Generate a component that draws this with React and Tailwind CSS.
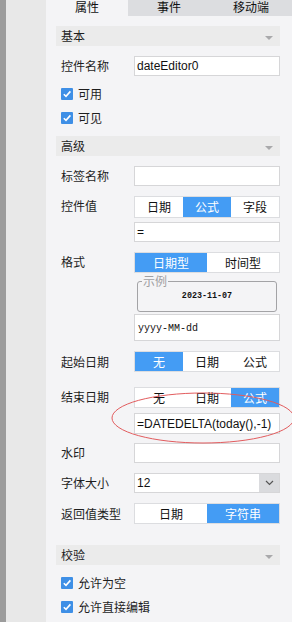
import React from "react";

const CJK = "font-['Noto_Sans_CJK_SC',sans-serif]";
const LAT = "font-['Liberation_Sans','Noto_Sans_CJK_SC',sans-serif]";

function Header({ title, className = "" }) {
  return (
    <div className={`h-[20px] bg-[#ebebeb] flex items-center justify-between pl-[5px] pr-[7px] ${className}`}>
      <span className="leading-[20px] text-[#1e1e1e]">{title}</span>
      <span className="w-0 h-0 mt-[3px] border-x-[4px] border-x-transparent border-t-[4px] border-t-[#a9a9ab]" />
    </div>
  );
}

function Check({ label, className = "" }) {
  return (
    <div className={`h-[24px] flex items-center pl-[5px] ${className}`}>
      <span className="w-[12px] h-[12px] bg-[#3e8fe6] rounded-[1px] flex items-center justify-center">
        <svg width="10" height="10" viewBox="0 0 10 10">
          <path d="M1.8 5.2 L4 7.4 L8.4 2.4" stroke="white" strokeWidth="1.6" fill="none" />
        </svg>
      </span>
      <span className="ml-[5px] leading-[16px] text-[#1e1e1e]">{label}</span>
    </div>
  );
}

function Input({ children, className = "", h = "h-[20px]" }) {
  return (
    <div className={`${h} bg-white border border-[#d6d6d8] flex items-center pl-[2px] overflow-hidden whitespace-nowrap ${LAT} text-[12px] text-[#111] ${className}`}>
      {children}
    </div>
  );
}

function Seg({ items, active, className = "" }) {
  return (
    <div className={`h-[21px] flex bg-white border border-[#dcdde0] ${className}`}>
      {items.map((it, i) => (
        <div
          key={it}
          className={`flex-1 flex items-center justify-center leading-[12px] ${
            i === active ? "bg-[#449cf4] text-white" : "text-[#111]"
          }`}
        >
          {it}
        </div>
      ))}
    </div>
  );
}

function Row({ label, children, top = false, className = "" }) {
  return (
    <div className={`flex ${top ? "items-start" : "items-center"} ${className}`}>
      <div className={`w-[78px] pl-[5px] shrink-0 text-[#1e1e1e] ${top ? "h-[20px] flex items-center" : ""}`}>
        {label}
      </div>
      <div className="flex-1 flex flex-col">{children}</div>
    </div>
  );
}

export default function App() {
  return (
    <div className={`relative flex w-[292px] h-[622px] overflow-hidden ${CJK} text-[12px]`}>
      <div className="w-[6px] shrink-0 bg-[#9c9c9c]" />
      <div className="w-[40px] shrink-0 bg-[#e8e8e8]" />
      <div className="flex-1 bg-[#f4f4f6] flex flex-col">
        <div className="h-[16px] flex">
          <div className="flex-1 flex justify-center text-[#111]">
            <span className="leading-[13px]">属性</span>
          </div>
          <div className="flex-1 flex justify-center bg-[#dcdde0] text-[#111]">
            <span className="leading-[13px]">事件</span>
          </div>
          <div className="flex-1 flex justify-center bg-[#dcdde0] text-[#111]">
            <span className="leading-[13px]">移动端</span>
          </div>
        </div>

        <div className="pl-[10px] pr-[12px] flex flex-col">
          <Header title="基本" className="mt-[10px]" />
          <Row label="控件名称" className="mt-[10px]">
            <Input>dateEditor0</Input>
          </Row>
          <Check label="可用" className="mt-[6px]" />
          <Check label="可见" />

          <Header title="高级" className="mt-[6px]" />
          <Row label="标签名称" className="mt-[10px]">
            <Input />
          </Row>
          <Row label="控件值" top className="mt-[10px]">
            <Seg items={["日期", "公式", "字段"]} active={1} className="h-[22px]" />
            <Input className="mt-[4px] h-[20px]">=</Input>
          </Row>
          <Row label="格式" top className="mt-[10px]">
            <Seg items={["日期型", "时间型"]} active={0} />
            <div className="relative mt-[8px] mx-[3px] h-[31px] border border-[#a3a3a6] rounded-[3px] flex justify-center pt-[9px]">
              <span className="absolute left-[4px] top-[-8px] px-[1px] bg-[#f4f4f6] text-[#a0a0a2] leading-[14px]">
                示例
              </span>
              <span className="font-['Liberation_Mono',monospace] text-[8.4px] font-bold leading-[10px] text-[#111]">
                2023-11-07
              </span>
            </div>
            <Input h="h-[27px]" className="mt-[2px]">
              <span className="font-['Liberation_Mono',monospace] text-[10px] text-[#111] pl-[1px] pt-[1px]">yyyy-MM-dd</span>
            </Input>
          </Row>
          <Row label="起始日期" className="mt-[10px]">
            <Seg items={["无", "日期", "公式"]} active={0} />
          </Row>
          <Row label="结束日期" top className="mt-[15px]">
            <Seg items={["无", "日期", "公式"]} active={2} />
            <Input className="mt-[5px] h-[21px]">=DATEDELTA(today(),-1)</Input>
          </Row>
          <Row label="水印" className="mt-[9px]">
            <Input />
          </Row>
          <Row label="字体大小" className="mt-[10px]">
            <div className="h-[20px] bg-white border border-[#d6d6d8] flex">
              <div className={`flex-1 flex items-center pl-[2px] ${LAT} text-[12px] text-[#111]`}>12</div>
              <div className="w-[20px] bg-[#dadbde] flex items-center justify-center">
                <svg width="9" height="6" viewBox="0 0 9 6">
                  <path d="M1 1 L4.5 4.5 L8 1" stroke="#555" strokeWidth="1.2" fill="none" />
                </svg>
              </div>
            </div>
          </Row>
          <Row label="返回值类型" className="mt-[10px]">
            <Seg items={["日期", "字符串"]} active={1} />
          </Row>

          <Header title="校验" className="mt-[21px]" />
          <Check label="允许为空" className="mt-[6px]" />
          <Check label="允许直接编辑" />
        </div>
      </div>

      <svg className="absolute inset-0 pointer-events-none" width="292" height="622" viewBox="0 0 292 622">
        <ellipse cx="203" cy="418" rx="91" ry="25" stroke="#e25c5e" strokeWidth="1" fill="none" />
      </svg>
    </div>
  );
}
